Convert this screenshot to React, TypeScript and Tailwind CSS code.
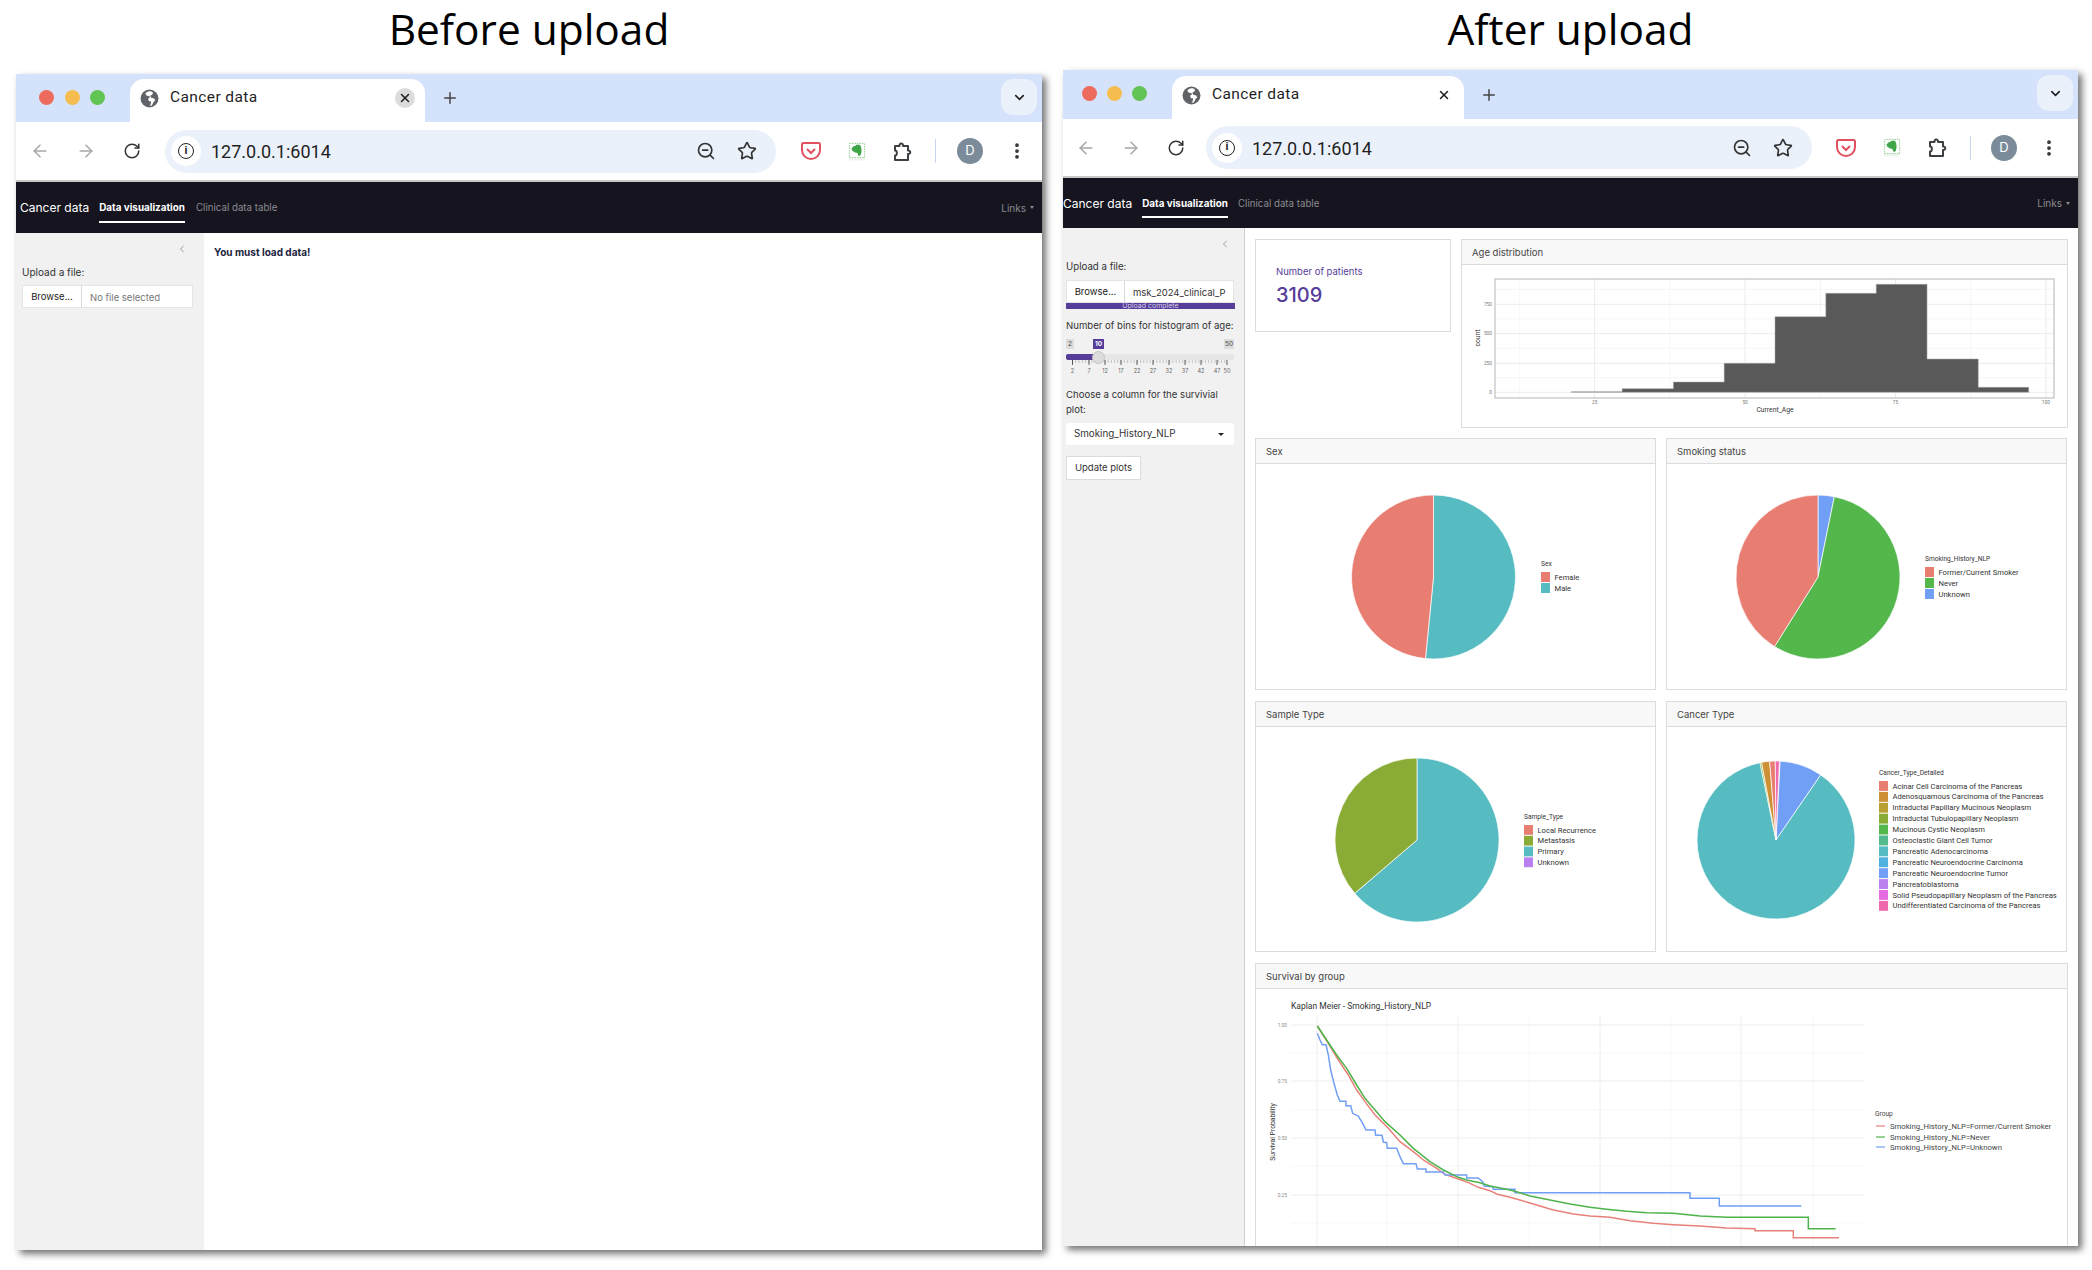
import type { ReactNode } from 'react'
import { ArrowLeft, ArrowRight, ChevronDown, ChevronLeft, EllipsisVertical, Plus, RotateCw, Star, X, ZoomOut } from 'lucide-react'

type Slice = [string, number, number]

function polar(cx: number, cy: number, r: number, deg: number) {
  const a = (deg * Math.PI) / 180
  return [cx + r * Math.sin(a), cy - r * Math.cos(a)]
}

function Pie({ cx, cy, r, slices }: { cx: number; cy: number; r: number; slices: Slice[] }) {
  return (
    <g stroke="#fff" strokeWidth="0.7">
      {slices.map(([color, from, to], i) => {
        const [x1, y1] = polar(cx, cy, r, from)
        const [x2, y2] = polar(cx, cy, r, to)
        const large = to - from > 180 ? 1 : 0
        return <path key={i} fill={color} d={`M${cx} ${cy}L${x1} ${y1}A${r} ${r} 0 ${large} 1 ${x2} ${y2}Z`} />
      })}
    </g>
  )
}

function Legend({ x, y, title, items, step, keyW = 9 }: { x: number; y: number; title: string; items: [string, string][]; step: number; keyW?: number }) {
  return (
    <g fontFamily="Roboto, sans-serif" fontSize="7.6" fill="#333">
      <text x={x} y={y + 4} fontSize="6.6">{title}</text>
      {items.map(([color, label], i) => (
        <g key={label}>
          <rect x={x} y={y + 10 + i * step} width={keyW} height={step - 1} fill={color} />
          <text x={x + keyW + 4.5} y={y + 17.5 + i * step}>{label}</text>
        </g>
      ))}
    </g>
  )
}

function Card({ title, className, children }: { title: string; className: string; children: ReactNode }) {
  return (
    <div className={`border border-[#dcdcdc] bg-white ${className}`}>
      <div className="flex h-[25px] items-center border-b border-[#dcdcdc] bg-[#f8f8f8] px-[10px] pt-[2px] text-[9.500px] text-[#444]">{title}</div>
      {children}
    </div>
  )
}

function Histogram() {
  const edges = [296, 420, 545, 669, 793, 917, 1040, 1164, 1289, 1412].map((v) => 1450 + v / 2.44)
  const tops = [485, 476, 456, 400, 260, 190, 163, 387, 472].map((v) => 230 + v / 3)
  const base = 392.3
  const outline = tops.map((t, i) => `${edges[i]},${t} ${edges[i + 1]},${t}`).join(' ')
  return (
    <svg width="605" height="163" viewBox="1462 265 605 163" className="block">
      <g stroke="#f0f0f0" strokeWidth="0.6">
        {[178, 267, 355, 443].map((v) => <line key={v} x1="1495" x2="2054" y1={230 + v / 3} y2={230 + v / 3} />)}
        {[170, 536, 904, 1271].map((v) => <line key={v} y1="279" y2="398" x1={1450 + v / 2.44} x2={1450 + v / 2.44} />)}
      </g>
      <g stroke="#ebebeb" strokeWidth="1">
        {[223, 311, 400, 487].map((v) => <line key={v} x1="1495" x2="2054" y1={230 + v / 3} y2={230 + v / 3} />)}
        {[353, 720, 1087, 1454].map((v) => <line key={v} y1="279" y2="398" x1={1450 + v / 2.44} x2={1450 + v / 2.44} />)}
      </g>
      <polygon points={`${edges[0]},${base} ${outline} ${edges[9]},${base}`} fill="#595959" stroke="#a8a8a8" strokeWidth="0.5" />
      <rect x="1495" y="279" width="559" height="119" fill="none" stroke="#b5b5b5" />
      <g fontFamily="Roboto, sans-serif" fontSize="4.8" fill="#777">
        {[['750', 223], ['500', 311], ['250', 400], ['0', 487]].map(([t, v]) => (
          <text key={t} x="1492" y={230 + Number(v) / 3 + 1.5} textAnchor="end">{t}</text>
        ))}
        {[['25', 353], ['50', 720], ['75', 1087], ['100', 1454]].map(([t, v]) => (
          <text key={t} x={1450 + Number(v) / 2.44} y="404" textAnchor="middle">{t}</text>
        ))}
      </g>
      <g fontFamily="Roboto, sans-serif" fontSize="6.8" fill="#333">
        <text x="1775" y="412" textAnchor="middle">Current_Age</text>
        <text x="1480" y="338" textAnchor="middle" transform="rotate(-90 1480 338)">count</text>
      </g>
    </svg>
  )
}

const redCurve = '172,198 205,250 235,300 265,345 290,390 315,425 345,465 385,505 420,545 460,575 490,600 530,625 555,643 595,657 625,668 655,682 690,692 710,702 750,712 800,726 840,738 880,750 940,762 990,768 1050,772 1110,782 1180,790 1240,794 1320,798 1400,804 1485,806 1485,812 1600,812 1600,833 1737,833'
const greenCurve = '172,198 200,240 230,285 260,325 290,375 315,415 345,450 375,485 420,525 460,565 510,605 550,630 595,652 620,660 660,668 690,678 740,688 770,695 810,708 870,720 930,732 990,742 1040,748 1100,754 1160,758 1240,760 1320,768 1400,772 1645,772 1645,806 1727,806'
const blueCurve = '172,220 180,240 187,254 198,254 205,285 212,330 222,370 232,405 240,424 258,424 258,437 272,437 278,460 295,468 308,490 318,510 345,510 347,526 366,526 370,546 380,548 382,565 410,565 420,590 430,611 468,611 472,627 498,627 498,636 550,636 555,645 620,645 620,654 655,654 668,665 672,678 698,680 700,688 765,688 765,698 1290,698 1290,715 1378,715 1378,738 1624,738'

function Survival() {
  return (
    <svg width="811" height="270" viewBox="1256 989 811 270" className="block">
      <g stroke="#f3f3f3" strokeWidth="0.7">
        {[1053, 1110, 1166, 1223].map((y) => <line key={y} x1="1291" x2="1865" y1={y} y2={y} />)}
        {[1387, 1529, 1671, 1813].map((x) => <line key={x} x1={x} x2={x} y1="1015" y2="1259" />)}
      </g>
      <g stroke="#eeeeee" strokeWidth="1">
        {[1025, 1081, 1138, 1195].map((y) => <line key={y} x1="1291" x2="1865" y1={y} y2={y} />)}
        {[1317, 1458, 1600, 1741].map((x) => <line key={x} x1={x} x2={x} y1="1015" y2="1259" />)}
      </g>
      <g transform="translate(1260 960) scale(0.33333)" fill="none" strokeWidth="4.500">
        <polyline points={redCurve} stroke="#e8807a" />
        <polyline points={blueCurve} stroke="#719ff5" />
        <polyline points={greenCurve} stroke="#4db34a" />
      </g>
      <g fontFamily="Roboto, sans-serif" fontSize="4.8" fill="#888">
        {[['1.00', 1025], ['0.75', 1081], ['0.50', 1138], ['0.25', 1195]].map(([t, y]) => (
          <text key={t} x="1287" y={Number(y) + 1.6} textAnchor="end">{t}</text>
        ))}
      </g>
      <g fontFamily="Roboto, sans-serif" fill="#333">
        <text x="1291" y="1009" fontSize="8.5">Kaplan Meier - Smoking_History_NLP</text>
        <text x="1274.5" y="1132" fontSize="6.8" textAnchor="middle" transform="rotate(-90 1274.500 1132)">Survival Probability</text>
      </g>
      <g fontFamily="Roboto, sans-serif" fontSize="7.7" fill="#444">
        <text x="1875" y="1116" fontSize="6.6">Group</text>
        <line x1="1876" x2="1885" y1="1126" y2="1126" stroke="#e8807a" strokeWidth="1.2" />
        <line x1="1876" x2="1885" y1="1137" y2="1137" stroke="#4db34a" strokeWidth="1.2" />
        <line x1="1876" x2="1885" y1="1147" y2="1147" stroke="#719ff5" strokeWidth="1.2" />
        <text x="1890" y="1128.5">Smoking_History_NLP=Former/Current Smoker</text>
        <text x="1890" y="1139.5">Smoking_History_NLP=Never</text>
        <text x="1890" y="1150">Smoking_History_NLP=Unknown</text>
      </g>
    </svg>
  )
}

function GlobeIcon() {
  return (
    <svg width="19" height="19" viewBox="0 0 18 18">
      <circle cx="9" cy="9" r="8.5" fill="#5f6368" />
      <path d="M9 2.2c-1.6.2-3 1-4 2.1l1.4 2 2.4.3.6 1.4-1.8 1.2.9 2.3 1.9.2-.2 2.8-1.2 1.2c1 .2 1.5.1 2.2 0l1.8-3.7 1.4-1-1-1.9-2.8-.7-.9-2.1 1.7-.8 1-1.7C11.300 2.400 10.200 2.200 9 2.200z" fill="#fff" />
    </svg>
  )
}

function PocketIcon() {
  return (
    <svg width="20" height="18" viewBox="0 0 20 18" fill="none">
      <path d="M2.500 1h15a1.500 1.500 0 0 1 1.500 1.500V8c0 5-4 9-9 9s-9-4-9-9V2.500A1.500 1.500 0 0 1 2.500 1z" stroke="#e0505f" strokeWidth="2" />
      <path d="M6 7l4 4 4-4" stroke="#e0505f" strokeWidth="2" />
    </svg>
  )
}

function EvernoteIcon() {
  return (
    <svg width="18" height="19" viewBox="0 0 18 19" fill="none">
      <rect x="0.500" y="0.500" width="17" height="18" rx="3" fill="#f0f2ef" />
      <rect x="1.500" y="1.500" width="15" height="14" fill="#fff" stroke="#9fdc9c" strokeDasharray="1.500 1" />
      <path d="M3.500 6.500L6 4h1.500L8 2.800h3.500c1.300.7 2 2.700 2 5.700 0 2.500-.6 4.500-1.500 5.200l-2-.3-.4-2.400-2.600-.5-3-2-.500-2z" fill="#3fa648" />
    </svg>
  )
}

function ExtensionIcon() {
  return (
    <svg width="21" height="21" viewBox="0 0 21 21" fill="none">
      <path d="M3 5h4.500c-.5-3.500 4-3.500 3.500 0H16v4.500c3-.5 3 4 0 3.500V19H3v-4.500c2.500.5 2.500-5.500 0-5V5z" stroke="#3c4043" strokeWidth="2" strokeLinejoin="round" />
    </svg>
  )
}

function Browser({ after, children }: { after?: boolean; children: ReactNode }) {
  const navBox = after ? 'w-[45px]' : 'w-[46px]'
  return (
    <div className="flex h-[1176px] flex-col overflow-hidden bg-white font-['Inter',sans-serif] shadow-[4px_4px_7px_rgba(0,0,0,0.55)]">
      <div className={`flex shrink-0 items-end bg-[#d5e2fb] ${after ? 'h-[49px]' : 'h-[48px]'}`}>
        <div className={`flex h-full items-center pb-[2px] ${after ? 'w-[109px] gap-[10px] pl-[19px]' : 'w-[114px] gap-[10.500px] pl-[23px]'}`}>
          <span className="size-[15px] rounded-full bg-[#ed6a5e]" />
          <span className="size-[15px] rounded-full bg-[#f5bd4f]" />
          <span className="size-[15px] rounded-full bg-[#61c454]" />
        </div>
        <div className={`flex h-[43px] items-center rounded-t-[14px] bg-white pb-[5px] pl-[10px] pr-[10px] ${after ? 'w-[292px]' : 'w-[295px]'}`}>
          <GlobeIcon />
          <span className="ml-[11px] flex-1 font-['Roboto',sans-serif] text-[15.500px] tracking-[0.4px] text-[#1f1f1f]">Cancer data</span>
          <span className={`flex size-[20px] items-center justify-center rounded-full ${after ? '' : 'bg-[#dcdcdc]'}`}>
            <X size={14} strokeWidth={2.500} color="#1f1f1f" />
          </span>
        </div>
        <div className="flex h-[43px] w-[50px] items-center justify-center pb-[5px]">
          <Plus size={18} color="#444" strokeWidth={2} />
        </div>
        <div className="flex flex-1 justify-end self-start pr-[5px] pt-[5px]">
          <div className="flex h-[36px] w-[36px] items-center justify-center rounded-[12px] bg-[#ebf1fb]">
            <ChevronDown size={15} strokeWidth={2.500} color="#1f1f1f" />
          </div>
        </div>
      </div>
      <div className={`flex shrink-0 items-center border-b-2 border-[#c8c8c8] bg-white ${after ? 'h-[59px]' : 'h-[60px] pl-px'}`}>
        <div className={`flex justify-center ${navBox}`}><ArrowLeft size={20} color="#a6a6a6" strokeWidth={1.800} /></div>
        <div className={`flex justify-center ${navBox}`}><ArrowRight size={20} color="#a6a6a6" strokeWidth={1.800} /></div>
        <div className={`flex justify-center ${navBox}`}><RotateCw size={18} color="#333" strokeWidth={2} /></div>
        <div className={`flex h-[43px] items-center rounded-full bg-[#ebf1fa] pl-[6px] ${after ? 'ml-[8px] w-[606px]' : 'ml-[10px] w-[611px]'}`}>
          <span className="flex size-[30px] items-center justify-center rounded-full bg-white">
            <span className="flex size-[16px] items-center justify-center rounded-full border-[1.500px] border-[#222] font-['Roboto',sans-serif] text-[11px] font-bold text-[#222]">i</span>
          </span>
          <span className="ml-[10px] flex-1 pt-[1px] font-['Roboto',sans-serif] text-[18px] text-[#1f1f1f]">127.0.0.1:6014</span>
          <ZoomOut size={20} color="#333" strokeWidth={2} />
          <Star size={20} color="#333" strokeWidth={2} className="ml-[21px] mr-[19px]" />
        </div>
        <div className={`flex w-[21px] justify-center ${after ? 'ml-[23px]' : 'ml-[24px]'}`}><PocketIcon /></div>
        <div className="ml-[25px] flex w-[21px] justify-center"><EvernoteIcon /></div>
        <div className="ml-[25px] flex w-[21px] justify-center"><ExtensionIcon /></div>
        <span className="ml-[22px] h-[24px] w-px bg-[#c9d6ee]" />
        <span className={`flex size-[26px] items-center justify-center rounded-full bg-[#7b8b9a] text-[13px] text-white ${after ? 'ml-[20px]' : 'ml-[21px]'}`}>D</span>
        <EllipsisVertical size={20} color="#333" strokeWidth={2.500} className={after ? 'ml-[22px]' : 'ml-[24px]'} />
      </div>
      <div className={`flex shrink-0 items-center bg-[#16151f] pr-[8px] ${after ? 'h-[50px]' : 'h-[51px] pl-[4px]'}`}>
        <span className="pt-px text-[12px] text-white">Cancer data</span>
        <span className="relative ml-[10px] flex h-[30px] items-center border-b-2 border-white pt-[2px] text-[9.900px] font-bold text-white">Data visualization</span>
        <span className={`pt-[2px] text-[9.700px] text-[#8a8a8f] ${after ? 'ml-[10px]' : 'ml-[11px]'}`}>Clinical data table</span>
        <span className="ml-auto pt-px text-[10px] text-[#8a8a8f]">Links</span>
        <span className="ml-[4px] size-0 border-x-[2.500px] border-t-[3px] border-x-transparent border-t-[#8a8a8f]" />
      </div>
      <div className="flex min-h-0 flex-1">{children}</div>
    </div>
  )
}

function FileInput({ name, muted }: { name: string; muted?: boolean }) {
  return (
    <div className={`flex h-[23px] border border-[#e4e4e4] bg-white text-[9.500px] ${muted ? 'w-[171px]' : 'w-[168px]'}`}>
      <span className={`flex shrink-0 items-center justify-center border-r border-[#d8d8d8] pt-px text-[#222] ${muted ? 'w-[59px]' : 'w-[58px]'}`}>Browse...</span>
      <span className={`overflow-hidden whitespace-nowrap pl-[8px] pr-[7px] pt-[5px] ${muted ? 'text-[#777]' : 'text-[#333]'}`}>{name}</span>
    </div>
  )
}

function BeforeView() {
  return (
    <>
      <div className="flex w-[188px] shrink-0 flex-col bg-[#f1f1f1] pl-[6px]">
        <div className="mt-[10px] flex justify-end pr-[16px]"><ChevronLeft size={12} color="#666" strokeWidth={1.200} /></div>
        <p className="mt-[9px] text-[10px] leading-4 text-[#333]">Upload a file:</p>
        <div className="mt-[5px]"><FileInput name="No file selected" muted /></div>
      </div>
      <div className="flex-1 pl-[10px] pt-[11px] text-[10px] font-bold leading-4 text-[#1b2340]">You must load data!</div>
    </>
  )
}

const tickLabels: [string, number][] = [['2', 6.5], ['7', 23], ['12', 39], ['17', 55], ['22', 71], ['27', 87], ['32', 103], ['37', 119], ['42', 135], ['47', 151], ['50', 161]]

function Slider() {
  const minor = Array.from({ length: 48 }, (_, i) => 6.5 + i * 3.24)
  return (
    <div className="relative mt-[5px] w-[168px]">
      <div className="flex h-[10px] justify-between text-[6.500px] leading-[10px] text-[#444]">
        <span className="bg-[#dcdcdc] px-[2px]">2</span>
        <span className="bg-[#dcdcdc] px-[1px]">50</span>
      </div>
      <span className="absolute left-[27px] top-0 h-[10px] bg-[#563d9a] px-[2px] text-[6.500px] font-bold leading-[10px] text-white">10</span>
      <div className="mt-[5px] h-[6px] rounded-[2px] bg-[#e6e6e6]">
        <div className="h-full w-[32px] rounded-l-[2px] bg-[#563d9a]" />
      </div>
      <span className="absolute left-[26px] top-[12px] size-[13px] rounded-full border border-[#c4c4c4] bg-[#dcdcdc]" />
      <svg width="168" height="15" viewBox="0 0 168 15" className="block">
        {minor.map((x, i) => <line key={i} x1={x} x2={x} y1="0" y2="3" stroke="#999" strokeWidth="0.5" />)}
        {tickLabels.map(([t, x]) => (
          <g key={t}>
            <line x1={x} x2={x} y1="0" y2="5" stroke="#222" strokeWidth="0.7" />
            <text x={x} y="13" fontSize="5.500" fill="#666" textAnchor="middle" fontFamily="Inter, sans-serif">{t}</text>
          </g>
        ))}
      </svg>
    </div>
  )
}

function AfterView() {
  return (
    <>
      <div className="flex w-[182px] shrink-0 flex-col border-r border-[#cfcfcf] bg-[#f1f1f1] pl-[3px] text-[#333]">
        <div className="mt-[10px] flex h-[12px] justify-end pr-[13px]"><ChevronLeft size={12} color="#666" strokeWidth={1.200} /></div>
        <p className="mt-[9px] text-[9.700px] leading-4">Upload a file:</p>
        <div className="mt-[5px]"><FileInput name="msk_2024_clinical_P" /></div>
        <div className="h-[6px] w-[169px] bg-[#563d9a] text-center text-[7px] leading-[6px] text-[#d6cdea]">Upload complete</div>
        <p className="mt-[9px] whitespace-nowrap text-[9.600px] leading-4">Number of bins for histogram of age:</p>
        <Slider />
        <p className="mt-[12px] w-[170px] text-[9.600px] leading-[15px]">Choose a column for the survivial plot:</p>
        <div className="mt-[6px] flex h-[22px] w-[168px] items-center justify-between rounded-[2px] bg-white pl-[8px] pr-[10px] text-[9.800px]">
          Smoking_History_NLP
          <span className="size-0 border-x-[3.500px] border-t-[3.500px] border-x-transparent border-t-[#222]" />
        </div>
        <button className="mt-[11px] flex h-[24px] w-[75px] items-center justify-center border border-[#dcdcdc] bg-white text-[9.500px]">Update plots</button>
      </div>
      <div className="min-w-0 flex-1 overflow-hidden pl-[10px] pt-[11px]">
        <div className="flex h-[189px] gap-[10px]">
          <div className="flex h-[93px] w-[196px] flex-col border border-[#dcdcdc] bg-white pl-[20px] pt-[25px]">
            <span className="text-[9.500px] leading-[14px] text-[#563d9a]">Number of patients</span>
            <span className="mt-[2px] text-[20px] font-medium leading-[28px] text-[#563d9a]">3109</span>
          </div>
          <Card title="Age distribution" className="h-[189px] w-[607px]"><Histogram /></Card>
        </div>
        <div className="mt-[10px] flex h-[252px] gap-[10px]">
          <Card title="Sex" className="w-[401px]">
            <svg width="399" height="225" viewBox="1256 464 399 225" className="block">
              <Pie cx={1433.5} cy={577} r={82} slices={[['#56bcc2', 0, 185.6], ['#e87d72', 185.6, 360]]} />
              <Legend x={1541} y={562} title="Sex" step={11} items={[['#e87d72', 'Female'], ['#56bcc2', 'Male']]} />
            </svg>
          </Card>
          <Card title="Smoking status" className="w-[401px]">
            <svg width="399" height="225" viewBox="1667 464 399 225" className="block">
              <Pie cx={1818} cy={577} r={82} slices={[['#719ff5', 0, 11.5], ['#53b74c', 11.5, 212], ['#e87d72', 212, 360]]} />
              <Legend x={1925} y={557} title="Smoking_History_NLP" step={11} items={[['#e87d72', 'Former/Current Smoker'], ['#53b74c', 'Never'], ['#719ff5', 'Unknown']]} />
            </svg>
          </Card>
        </div>
        <div className="mt-[11px] flex h-[251px] gap-[10px]">
          <Card title="Sample Type" className="w-[401px]">
            <svg width="399" height="224" viewBox="1256 727 399 224" className="block">
              <Pie cx={1417} cy={840} r={82} slices={[['#56bcc2', 0, 229.4], ['#8aab35', 229.4, 360]]} />
              <Legend x={1524} y={815} title="Sample_Type" step={10.8} items={[['#e87d72', 'Local Recurrence'], ['#8aab35', 'Metastasis'], ['#56bcc2', 'Primary'], ['#bb80f0', 'Unknown']]} />
            </svg>
          </Card>
          <Card title="Cancer Type" className="w-[401px]">
            <svg width="399" height="224" viewBox="1667 727 399 224" className="block">
              <Pie cx={1776} cy={840} r={79} slices={[['#719ff5', 3, 34.5], ['#56bcc2', 34.5, 348.3], ['#8aab35', 348.3, 349.5], ['#cd9034', 349.5, 355.4], ['#e87d72', 355.4, 359.5], ['#ee6aad', 359.5, 362.5]]} />
              <Legend x={1879} y={771} title="Cancer_Type_Detailed" step={10.9} items={[['#e87d72', 'Acinar Cell Carcinoma of the Pancreas'], ['#cd9034', 'Adenosquamous Carcinoma of the Pancreas'], ['#b8a035', 'Intraductal Papillary Mucinous Neoplasm'], ['#8aab35', 'Intraductal Tubulopapillary Neoplasm'], ['#53b74c', 'Mucinous Cystic Neoplasm'], ['#53ba8e', 'Osteoclastic Giant Cell Tumor'], ['#56bcc2', 'Pancreatic Adenocarcinoma'], ['#52b0e0', 'Pancreatic Neuroendocrine Carcinoma'], ['#719ff5', 'Pancreatic Neuroendocrine Tumor'], ['#bb80f0', 'Pancreatoblastoma'], ['#e56be0', 'Solid Pseudopapillary Neoplasm of the Pancreas'], ['#ee6aad', 'Undifferentiated Carcinoma of the Pancreas']]} />
            </svg>
          </Card>
        </div>
        <Card title="Survival by group" className="mt-[11px] h-[300px] w-[813px]"><Survival /></Card>
      </div>
    </>
  )
}

export default function App() {
  return (
    <div className="flex h-[1270px] w-[2092px] overflow-hidden bg-white font-['Open_Sans',sans-serif] text-black">
      <section className="ml-[16px] w-[1026px]">
        <h2 className="mb-[16px] flex h-[58px] items-center justify-center text-[42.400px]">Before upload</h2>
        <Browser><BeforeView /></Browser>
      </section>
      <section className="ml-[21px] w-[1015px]">
        <h2 className="mb-[12px] flex h-[58px] items-center justify-center text-[42.400px]">After upload</h2>
        <Browser after><AfterView /></Browser>
      </section>
    </div>
  )
}
